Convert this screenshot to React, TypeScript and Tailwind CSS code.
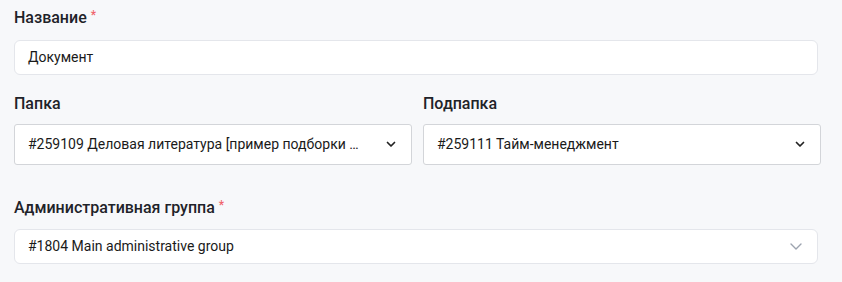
import React from "react";

function Chevron({ light }: { light?: boolean }) {
  if (light) {
    return (
      <svg width="12" height="7" viewBox="0 0 12 7" className="shrink-0">
        <path d="M1 1 L6 6 L11 1" fill="none" stroke="#9ca3af" strokeWidth="1.4" strokeLinecap="round" strokeLinejoin="round" />
      </svg>
    );
  }
  return (
    <svg width="10" height="7" viewBox="0 0 10 7" className="shrink-0">
      <path d="M1.5 1.5 L5 5 L8.5 1.5" fill="none" stroke="#222" strokeWidth="1.7" strokeLinecap="round" strokeLinejoin="round" />
    </svg>
  );
}

function Label({ text, required }: { text: string; required?: boolean }) {
  return (
    <div className="flex items-start h-[20px] leading-[20px] text-[16px] font-medium text-[#1f2329]">
      <span>{text}</span>
      {required && <span className="ml-[4px] text-[12px] leading-[14px] text-[#f0646c]">*</span>}
    </div>
  );
}

export default function App() {
  return (
    <div className="w-[842px] h-[282px] bg-[#f7f8fa] pl-[14px] pt-[8px] font-['Roboto',sans-serif] text-[14px] text-[#1a1a1a] overflow-hidden">
      <Label text="Название" required />
      <div className="mt-[12px] w-[804px] h-[35px] bg-white border border-[#e4e6eb] rounded-[6px] flex items-center px-[13px]">
        Документ
      </div>

      <div className="mt-[19px] flex gap-[11px]">
        <div className="w-[398px]">
          <Label text="Папка" />
          <div className="mt-[10px] h-[41px] bg-white border border-[#d3d5d9] rounded-[3px] flex items-center pl-[13px] pr-[15px]">
            <span className="flex-1 truncate pr-[20px]">#259109 Деловая литература [пример подборки …</span>
            <Chevron />
          </div>
        </div>
        <div className="w-[398px]">
          <Label text="Подпапка" />
          <div className="mt-[10px] h-[41px] bg-white border border-[#d3d5d9] rounded-[3px] flex items-center pl-[13px] pr-[15px]">
            <span className="flex-1 truncate">#259111 Тайм-менеджмент</span>
            <Chevron />
          </div>
        </div>
      </div>

      <div className="mt-[33px]">
        <Label text="Административная группа" required />
      </div>
      <div className="mt-[11px] w-[804px] h-[35px] bg-white border border-[#e4e6eb] rounded-[6px] flex items-center pl-[13px] pr-[15px]">
        <span className="flex-1">#1804 Main administrative group</span>
        <Chevron light />
      </div>
    </div>
  );
}
